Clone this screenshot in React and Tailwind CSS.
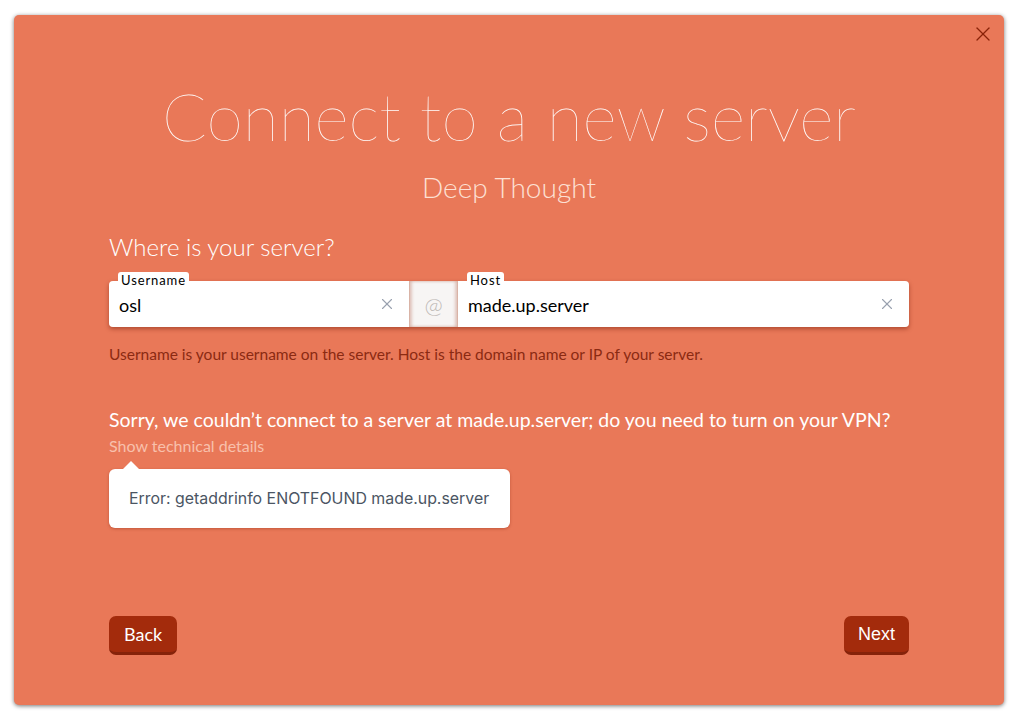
import { X } from 'lucide-react';

const JOST = { fontFamily: 'Lato, "Noto Sans", sans-serif' };

function Field({ label, value, className }) {
  return (
    <div className={`relative flex items-center bg-white h-full ${className}`}>
      <span className="absolute -top-[9px] left-[9px] bg-white px-[3px] rounded-t-[3px] text-[13px] leading-[17px] text-black tracking-[0.9px]">
        {label}
      </span>
      <span className="flex-1 pl-[10px] pt-[2px] text-[18px] text-black">{value}</span>
      <X className="w-[18px] h-[18px] mr-[13px] text-gray-400" strokeWidth={1.5} />
    </div>
  );
}

export default function App() {
  return (
    <div className="min-h-screen bg-white p-[14px] pt-[15px] pb-[15px]" style={JOST}>
      <div className="relative w-[990px] h-[690px] bg-[#e97858] rounded-[5px] shadow-[0_1px_4px_rgba(0,0,0,0.55)] flex flex-col px-[95px]">
        <button className="absolute top-[7px] right-[9px] text-[#8a2208]">
          <X className="w-[24px] h-[24px]" strokeWidth={1.3} />
        </button>

        <h1 className="mt-[61px] text-center text-white text-[66px] leading-[80px] font-thin whitespace-nowrap">
          Connect to a new server
        </h1>
        <div className="mt-[14px] text-center text-[#fde0d4] text-[28px] leading-[34px] font-light">
          Deep Thought
        </div>

        <div className="mt-[28px] text-white text-[24px] leading-[30px] font-light">Where is your server?</div>

        <div className="mt-[19px] flex h-[46px] rounded-[4px] shadow-[0_2px_4px_rgba(120,30,10,0.5)]">
          <Field label="Username" value="osl" className="w-[300px] rounded-l-[4px]" />
          <div className="w-[49px] flex items-center justify-center bg-[#f7f5f4] text-[#bdb8b5] text-[22px] font-light border-x border-[#d9b3a6] shadow-[inset_2px_0_3px_rgba(160,60,30,0.25),inset_-2px_0_3px_rgba(160,60,30,0.25)]">
            @
          </div>
          <Field label="Host" value="made.up.server" className="flex-1 rounded-r-[4px]" />
        </div>

        <p className="mt-[17px] text-[15.5px] leading-[20px] text-[#8b2a12]">
          Username is your username on the server. Host is the domain name or IP of your server.
        </p>

        <p className="mt-[43px] text-[19.5px] leading-[26px] text-white whitespace-nowrap">
          Sorry, we couldn’t connect to a server at made.up.server; do you need to turn on your VPN?
        </p>
        <div className="mt-[2px] text-[16px] leading-[22px] text-[#f8c0ac]">Show technical details</div>

        <div className="relative mt-[12px] w-[401px] h-[59px] bg-white rounded-[6px] shadow-[0_1px_3px_rgba(120,30,10,0.35)] flex items-center pl-[20px]">
          <span className="absolute -top-[8px] left-[14px] w-0 h-0 border-x-[8px] border-x-transparent border-b-[8px] border-b-white" />
          <span className="text-[15.9px] text-[#4b5563]" style={{ fontFamily: 'Inter, sans-serif' }}>
            Error: getaddrinfo ENOTFOUND made.up.server
          </span>
        </div>

        <div className="mt-auto mb-[50px] flex justify-between">
          <button className="h-[39px] px-[15px] rounded-[7px] bg-[#a32b0c] border-b-[3px] border-[#86230a] text-white text-[18px]">
            Back
          </button>
          <button className="h-[39px] px-[14px] rounded-[7px] bg-[#a32b0c] border-b-[3px] border-[#86230a] text-white text-[18px]" style={{ fontFamily: '"Liberation Sans", sans-serif' }}>
            Next
          </button>
        </div>
      </div>
    </div>
  );
}
